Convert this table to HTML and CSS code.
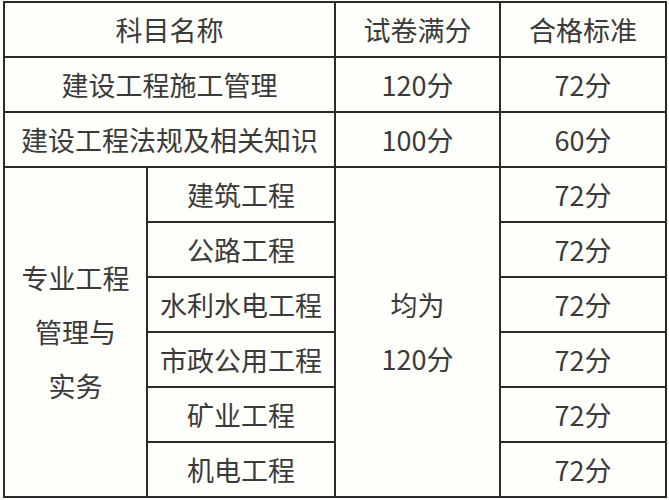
FILE: index.html
```html
<!DOCTYPE html>
<html lang="zh">
<head>
<meta charset="utf-8">
<link rel="stylesheet" href="styles.css">
</head>
<body>
<table class="score-table">
  <colgroup>
    <col class="c1">
    <col class="c2">
    <col class="c3">
    <col class="c4">
  </colgroup>
  <tr>
    <td colspan="2">科目名称</td>
    <td>试卷满分</td>
    <td>合格标准</td>
  </tr>
  <tr>
    <td colspan="2">建设工程施工管理</td>
    <td>120分</td>
    <td>72分</td>
  </tr>
  <tr>
    <td colspan="2">建设工程法规及相关知识</td>
    <td>100分</td>
    <td>60分</td>
  </tr>
  <tr>
    <td rowspan="6" class="multi">专业工程<br>管理与<br>实务</td>
    <td>建筑工程</td>
    <td rowspan="6" class="multi">均为<br>120分</td>
    <td>72分</td>
  </tr>
  <tr><td>公路工程</td><td>72分</td></tr>
  <tr><td>水利水电工程</td><td>72分</td></tr>
  <tr><td>市政公用工程</td><td>72分</td></tr>
  <tr><td>矿业工程</td><td>72分</td></tr>
  <tr><td>机电工程</td><td>72分</td></tr>
</table>
</body>
</html>
```

FILE: styles.css
```css
html, body {
  margin: 0;
  padding: 0;
  background: #fefefb;
}
body {
  padding: 1px 0 0 3px;
  font-family: "Noto Sans CJK SC", "Noto Sans", sans-serif;
  color: #3a3a3a;
}
.score-table {
  border-collapse: collapse;
  table-layout: fixed;
  width: 662px;
}
.c1 { width: 143px; }
.c2 { width: 188px; }
.c3 { width: 165px; }
.c4 { width: 166px; }
.score-table td {
  border: 2px solid #2a2a2a;
  height: 53px;
  padding: 0;
  text-align: center;
  vertical-align: middle;
  font-size: 27px;
  line-height: 34px;
  white-space: nowrap;
}
.score-table td.multi {
  line-height: 54px;
}
```
